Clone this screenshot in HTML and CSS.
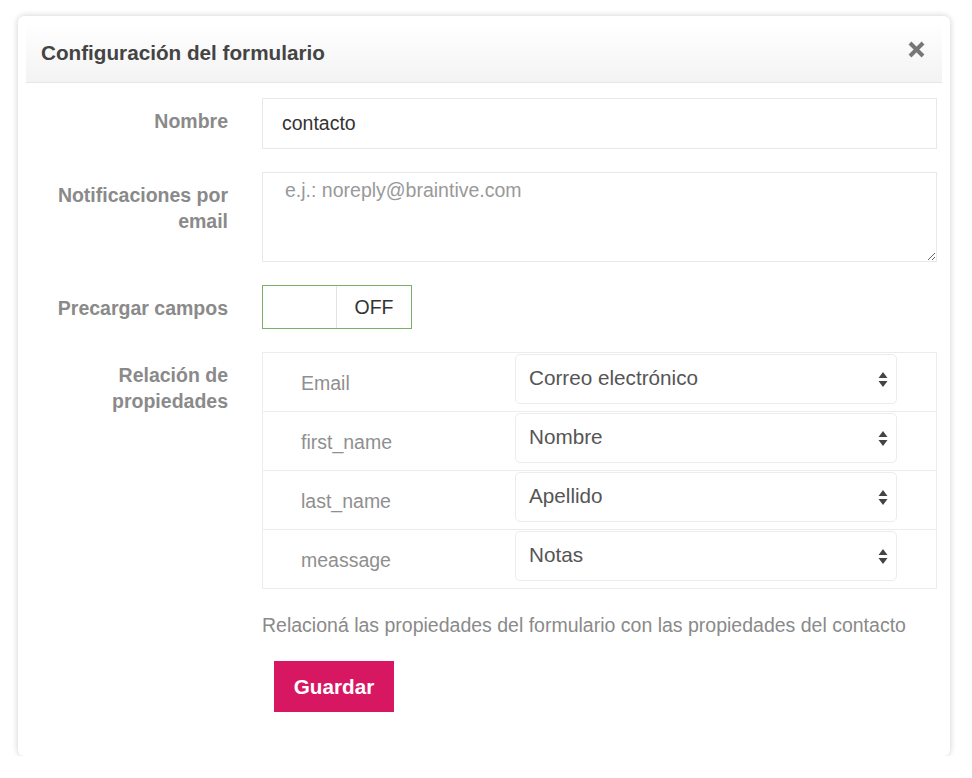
FILE: index.html
```html
<!DOCTYPE html>
<html lang="es">
<head>
<meta charset="utf-8">
<title>Configuración del formulario</title>
<link rel="stylesheet" href="styles.css">
</head>
<body>
<div class="modal">
  <div class="modal-header">
    <h1 class="modal-title">Configuración del formulario</h1>
    <button class="close" type="button" aria-label="Cerrar">
      <svg width="17" height="17" viewBox="0 0 17 17"><path d="M2 2 L15 15 M15 2 L2 15" stroke="#777" stroke-width="4" stroke-linecap="butt" fill="none"/></svg>
    </button>
  </div>
  <div class="modal-body">
    <div class="row">
      <label class="label">Nombre</label>
      <div class="control"><input class="input" type="text" value="contacto"></div>
    </div>
    <div class="row">
      <label class="label">Notificaciones por email</label>
      <div class="control"><textarea class="textarea" placeholder="e.j.: noreply@braintive.com"></textarea></div>
    </div>
    <div class="row">
      <label class="label">Precargar campos</label>
      <div class="control">
        <div class="toggle"><span class="toggle-blank"></span><span class="toggle-off">OFF</span></div>
      </div>
    </div>
    <div class="row">
      <label class="label">Relación de propiedades</label>
      <div class="control">
        <div class="map-table">
          <div class="map-row">
            <span class="map-key">Email</span>
            <div class="select"><span>Correo electrónico</span><svg class="arrows" width="10" height="17" viewBox="0 0 10 17"><path d="M5 1 L9.5 7 L0.5 7 Z M0.5 10 L9.5 10 L5 16 Z" fill="#444"/></svg></div>
          </div>
          <div class="map-row">
            <span class="map-key">first_name</span>
            <div class="select"><span>Nombre</span><svg class="arrows" width="10" height="17" viewBox="0 0 10 17"><path d="M5 1 L9.5 7 L0.5 7 Z M0.5 10 L9.5 10 L5 16 Z" fill="#444"/></svg></div>
          </div>
          <div class="map-row">
            <span class="map-key">last_name</span>
            <div class="select"><span>Apellido</span><svg class="arrows" width="10" height="17" viewBox="0 0 10 17"><path d="M5 1 L9.5 7 L0.5 7 Z M0.5 10 L9.5 10 L5 16 Z" fill="#444"/></svg></div>
          </div>
          <div class="map-row">
            <span class="map-key">meassage</span>
            <div class="select"><span>Notas</span><svg class="arrows" width="10" height="17" viewBox="0 0 10 17"><path d="M5 1 L9.5 7 L0.5 7 Z M0.5 10 L9.5 10 L5 16 Z" fill="#444"/></svg></div>
          </div>
        </div>
        <p class="help">Relacioná las propiedades del formulario con las propiedades del contacto</p>
        <button class="btn-save" type="button">Guardar</button>
      </div>
    </div>
  </div>
</div>
</body>
</html>
```

FILE: styles.css
```css
* { box-sizing: border-box; }

body {
  margin: 0;
  background: #fff;
  font-family: "Liberation Sans", Arial, Helvetica, sans-serif;
  color: #333;
}

.modal {
  width: 932px;
  margin: 16px 0 0 18px;
  padding: 8px;
  background: #fff;
  border-radius: 6px;
  box-shadow: 0 0 6px rgba(0, 0, 0, 0.2);
}

.modal-header {
  height: 59px;
  display: flex;
  align-items: center;
  justify-content: space-between;
  padding: 0 17px 0 15px;
  background: linear-gradient(#ffffff, #f3f3f3);
  border-bottom: 1px solid #e6e6e6;
}

.modal-title {
  margin: 0;
  font-size: 20.7px;
  font-weight: bold;
  color: #444;
}

.close {
  border: 0;
  background: none;
  padding: 0;
  width: 17px;
  height: 17px;
  display: flex;
  margin-top: -7px;
}

.modal-body {
  padding: 15px 5px 36px 0;
}

.row {
  display: grid;
  grid-template-columns: 202px 675px;
  column-gap: 34px;
  margin-bottom: 23px;
}

.row:last-child { margin-bottom: 0; }

.label {
  text-align: right;
  font-size: 19.5px;
  font-weight: bold;
  line-height: 26px;
  padding-top: 10px;
  color: #8a8a8a;
}

.input {
  display: block;
  width: 100%;
  height: 51px;
  border: 1px solid #e8e8e8;
  padding: 0 19px;
  font: 19.5px "Liberation Sans", Arial, sans-serif;
  color: #333;
  outline: none;
}

.textarea {
  display: block;
  width: 100%;
  height: 90px;
  border: 1px solid #e8e8e8;
  padding: 4px 22px;
  font: 19.5px/26px "Liberation Sans", Arial, sans-serif;
  color: #333;
  resize: vertical;
  outline: none;
}

.textarea::placeholder { color: #999; }

.toggle {
  display: flex;
  width: 150px;
  height: 44px;
  border: 1.5px solid #79b066;
}

.toggle-blank {
  width: 74px;
  border-right: 1px solid #e3e3e3;
}

.toggle-off {
  flex: 1;
  display: flex;
  align-items: center;
  justify-content: center;
  font-size: 19.5px;
  color: #333;
}

.map-table {
  border: 1px solid #ececec;
}

.map-row {
  display: grid;
  grid-template-columns: 252px 382px;
  height: 59px;
  border-top: 1px solid #ececec;
}

.map-row:first-child { border-top: 0; height: 58px; }

.map-key {
  align-self: center;
  padding-left: 38px;
  padding-top: 2px;
  font-size: 19.5px;
  color: #8f8f8f;
}

.select {
  margin-top: 1px;
  height: 50px;
  display: flex;
  align-items: center;
  justify-content: space-between;
  padding: 0 8px 0 13px;
  border: 1px solid #ececec;
  border-radius: 5px;
  font-size: 20.7px;
  color: #555;
}

.select span { margin-top: -2px; }

.help {
  margin: 23px 0 0;
  font-size: 19.5px;
  line-height: 26px;
  color: #8a8a8a;
}

.btn-save {
  display: block;
  margin: 23px 0 0 12px;
  width: 120px;
  height: 51px;
  border: 0;
  background: #d81763;
  color: #fff;
  font: bold 20.7px "Liberation Sans", Arial, sans-serif;
  padding: 0;
}
```
